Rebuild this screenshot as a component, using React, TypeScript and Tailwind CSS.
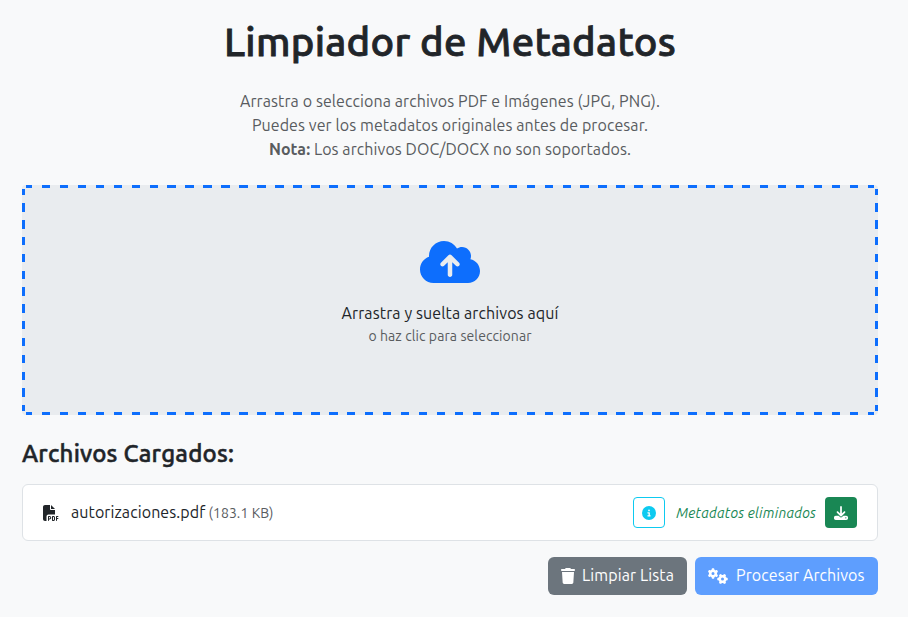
import {
  FaCloudArrowUp,
  FaFilePdf,
  FaCircleInfo,
  FaDownload,
  FaTrash,
  FaGears,
} from 'react-icons/fa6';

export default function App() {
  return (
    <div className="min-h-[617px] w-full bg-[#f8f9fa] pl-[22px] pr-[30px] pt-[18px] font-['Ubuntu','Noto_Sans',sans-serif] text-base leading-6 tracking-[0.088px] text-[#212529]">
      <h1 className="mb-[23px] whitespace-nowrap text-center text-[40px] font-medium leading-[48px] tracking-[0.27px] [-webkit-text-stroke:0.8px_#212529]">
        Limpiador de Metadatos
      </h1>
      <p className="mb-6 whitespace-nowrap text-center text-[#595c5f]">
        <span>Arrastra o selecciona archivos PDF e Imágenes (JPG, PNG).</span>
        <br />
        <span>Puedes ver los metadatos originales antes de procesar.</span>
        <br />
        <span>
          <strong className="font-bold">Nota:</strong> Los archivos DOC/DOCX no son soportados.
        </span>
      </p>

      <div className="flex h-[230px] flex-col items-center rounded-[4px] bg-[#e9ecef] bg-[image:repeating-linear-gradient(to_right,#0d6efd_0_6.25px,transparent_6.25px_15.8px,#0d6efd_15.8px_17.956px),repeating-linear-gradient(to_right,#0d6efd_0_6.25px,transparent_6.25px_15.8px,#0d6efd_15.8px_17.956px),repeating-linear-gradient(to_bottom,#0d6efd_0_5.9px,transparent_5.9px_14.32px,#0d6efd_14.32px_16.82px),repeating-linear-gradient(to_bottom,#0d6efd_0_5.9px,transparent_5.9px_14.32px,#0d6efd_14.32px_16.82px)] bg-no-repeat [background-position:4px_0,4px_100%,0_4px,100%_4px] [background-size:848px_3px,848px_3px,3px_222px,3px_222px] pt-[53px] text-center">
        <FaCloudArrowUp className="h-[48px] w-[60px] shrink-0 text-[#0d6efd]" />
        <p className="mt-[15px] whitespace-nowrap tracking-[0.11px]">Arrastra y suelta archivos aquí</p>
        <p className="whitespace-nowrap text-sm leading-[23px] text-[#595c5f]">o haz clic para seleccionar</p>
      </div>

      <h2 className="mb-4 mt-6 whitespace-nowrap text-2xl font-medium leading-[29px] tracking-[0.22px] [-webkit-text-stroke:0.5px_#212529]">Archivos Cargados:</h2>

      <div className="flex h-[57px] items-center justify-between rounded-md border border-[#dee2e6] bg-white pl-5 pr-5">
        <div className="flex items-center whitespace-nowrap">
          <FaFilePdf className="mr-3 size-4" />
          <span className="-mt-0.5">autorizaciones.pdf</span>
          <span className="ml-[3px] text-sm text-[#595c5f]">(183.1 KB)</span>
        </div>
        <div className="flex items-center whitespace-nowrap">
          <button className="flex h-[31px] w-8 items-center justify-center rounded border border-[#0dcaf0] text-[#0dcaf0]">
            <FaCircleInfo className="size-[14px]" />
          </button>
          <em className="ml-[11px] mr-[9px] text-sm tracking-[0.2px] text-[#198754]">Metadatos eliminados</em>
          <button className="flex h-[31px] w-8 items-center justify-center rounded bg-[#198754] text-white">
            <FaDownload className="size-[14px]" />
          </button>
        </div>
      </div>

      <div className="mt-4 flex justify-end gap-2 whitespace-nowrap text-white">
        <button className="flex h-[38px] w-[139px] items-center rounded-md bg-[#6c757d] pl-[13px]">
          <FaTrash className="mr-[7px] h-4 w-[14px]" />
          <span className="-mt-0.5 tracking-[0.12px]">Limpiar Lista</span>
        </button>
        <button className="flex h-[38px] w-[183px] items-center rounded-md bg-[#5e9efe] pl-[13px]">
          <FaGears className="mr-2 h-4 w-5" />
          <span className="-mt-0.5">Procesar Archivos</span>
        </button>
      </div>
    </div>
  );
}
